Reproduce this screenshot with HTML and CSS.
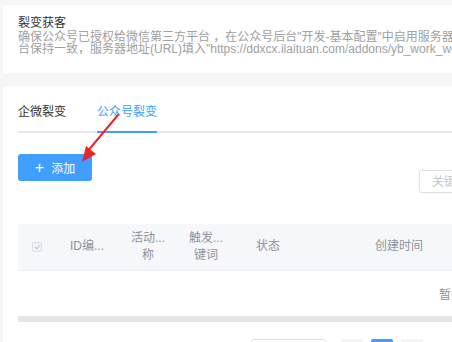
FILE: index.html
```html
<!DOCTYPE html>
<html lang="zh-CN">
<head>
    <meta charset="UTF-8">
    <meta name="viewport" content="width=device-width, initial-scale=1.0">
    <title>裂变获客</title>
    <link rel="stylesheet" href="styles.css">
</head>
<body>
    <div class="page">
        <div class="card intro">
            <h2 class="intro-title">裂变获客</h2>
            <p class="intro-desc">
                确保公众号已授权给微信第三方平台 ，在公众号后台"开发-基本配置"中启用服务器配置，令牌(Token)与第三方平<br>
                台保持一致，服务器地址(URL)填入"https://ddxcx.ilaituan.com/addons/yb_work_wechat/notify"
            </p>
        </div>

        <div class="card main">
            <div class="tabs">
                <div class="tab">企微裂变</div>
                <div class="tab active">公众号裂变</div>
            </div>

            <button class="btn-add"><span class="plus">+</span>添加</button>

            <div class="toolbar">
                <input class="search" type="text" placeholder="关键词搜索">
            </div>

            <table class="grid">
                <colgroup>
                    <col style="width: 37px">
                    <col style="width: 64px">
                    <col style="width: 58px">
                    <col style="width: 58px">
                    <col style="width: 66px">
                    <col style="width: 196px">
                    <col style="width: 120px">
                </colgroup>
                <thead>
                    <tr>
                        <th><span class="check"></span></th>
                        <th>ID编...</th>
                        <th>活动...<br>称</th>
                        <th>触发...<br>键词</th>
                        <th>状态</th>
                        <th>创建时间</th>
                        <th>操作</th>
                    </tr>
                </thead>
                <tbody>
                    <tr>
                        <td colspan="7" class="empty"><span>暂无数据</span></td>
                    </tr>
                </tbody>
            </table>
            <div class="scrollbar"></div>

            <div class="pager">
                <div class="pager-size"></div>
                <div class="pager-btn"></div>
                <div class="pager-btn current"></div>
                <div class="pager-btn"></div>
            </div>
        </div>
    </div>

    <!-- annotation arrow drawn over the page -->
    <svg class="arrow" width="60" height="60" viewBox="0 0 60 60">
        <line x1="49" y1="5" x2="18" y2="42" stroke="#e5262a" stroke-width="2" stroke-linecap="round"/>
        <polygon points="13,52 17,36 27,44" fill="#e5262a"/>
    </svg>
</body>
</html>
```

FILE: styles.css
```css
* {
    margin: 0;
    padding: 0;
    box-sizing: border-box;
}

body {
    background: #f5f6f8;
    font-family: "Liberation Sans", "Noto Sans CJK SC", sans-serif;
    color: #333333;
    overflow: hidden;
    width: 452px;
    height: 342px;
    position: relative;
}

.page {
    width: 620px;
    padding: 5px 0 0 3px;
}

.card {
    background: #ffffff;
    border-radius: 2px;
}

/* intro block */
.intro {
    height: 68px;
    padding: 11px 15px 0;
}

.intro-title {
    font-size: 12px;
    font-weight: 400;
    line-height: 15px;
    color: #303133;
    white-space: nowrap;
}

.intro-desc {
    font-size: 12px;
    line-height: 12px;
    color: #a0a0a0;
    white-space: nowrap;
}

/* main block */
.main {
    margin-top: 13px;
    padding: 7px 15px 0;
    height: 300px;
}

.tabs {
    display: flex;
    gap: 31px;
    border-bottom: 2px solid #e4e7ed;
    height: 40px;
}

.tab {
    font-size: 12px;
    line-height: 38px;
    color: #303133;
    white-space: nowrap;
}

.tab.active {
    color: #409eff;
    border-bottom: 2px solid #409eff;
    margin-bottom: -2px;
    height: 40px;
}

.btn-add {
    margin-top: 21px;
    width: 74px;
    height: 27px;
    background: #409eff;
    color: #ffffff;
    border: none;
    border-radius: 3px;
    font-family: inherit;
    font-size: 12px;
    display: flex;
    align-items: center;
    justify-content: center;
    gap: 7px;
}

.plus {
    font-size: 16px;
    font-weight: 300;
    line-height: 1;
}

.toolbar {
    display: flex;
    margin-top: -11px;
}

.search {
    margin-left: 401px;
    width: 140px;
    height: 23px;
    border: 1px solid #dcdfe6;
    border-radius: 3px;
    padding: 0 12px;
    font-family: inherit;
    font-size: 12px;
    color: #606266;
    outline: none;
}

.search::placeholder {
    color: #c0c4cc;
}

/* table */
.grid {
    margin-top: 31px;
    border-collapse: collapse;
    table-layout: fixed;
    width: 599px;
}

.grid th {
    background: #f5f7fa;
    height: 46px;
    font-size: 12px;
    font-weight: 400;
    line-height: 17px;
    color: #909399;
    text-align: center;
    border-bottom: 1px solid #ebeef5;
    white-space: nowrap;
}

.check {
    display: inline-block;
    width: 10px;
    height: 10px;
    border: 1px solid #dcdfe6;
    background: #edf2fc;
    border-radius: 2px;
    vertical-align: middle;
    position: relative;
}

.check::after {
    content: "";
    position: absolute;
    left: 3px;
    top: 1px;
    width: 2px;
    height: 4px;
    border: solid #c0c4cc;
    border-width: 0 1px 1px 0;
    transform: rotate(45deg);
}

.empty {
    height: 46px;
    font-size: 12px;
    color: #909399;
    padding-left: 421px;
    white-space: nowrap;
}

.scrollbar {
    width: 599px;
    height: 6px;
    background: #e6e6e6;
}

.pager {
    display: flex;
    align-items: flex-start;
    margin-top: 17px;
    padding-left: 233px;
}

.pager-size {
    width: 75px;
    height: 24px;
    border: 1px solid #dcdfe6;
    border-radius: 3px;
    margin-right: 15px;
}

.pager-btn {
    width: 22px;
    height: 24px;
    background: #f4f4f5;
    border-radius: 2px;
    margin-right: 8px;
}

.pager-btn.current {
    background: #409eff;
}

.arrow {
    position: absolute;
    left: 69px;
    top: 110px;
}
```
